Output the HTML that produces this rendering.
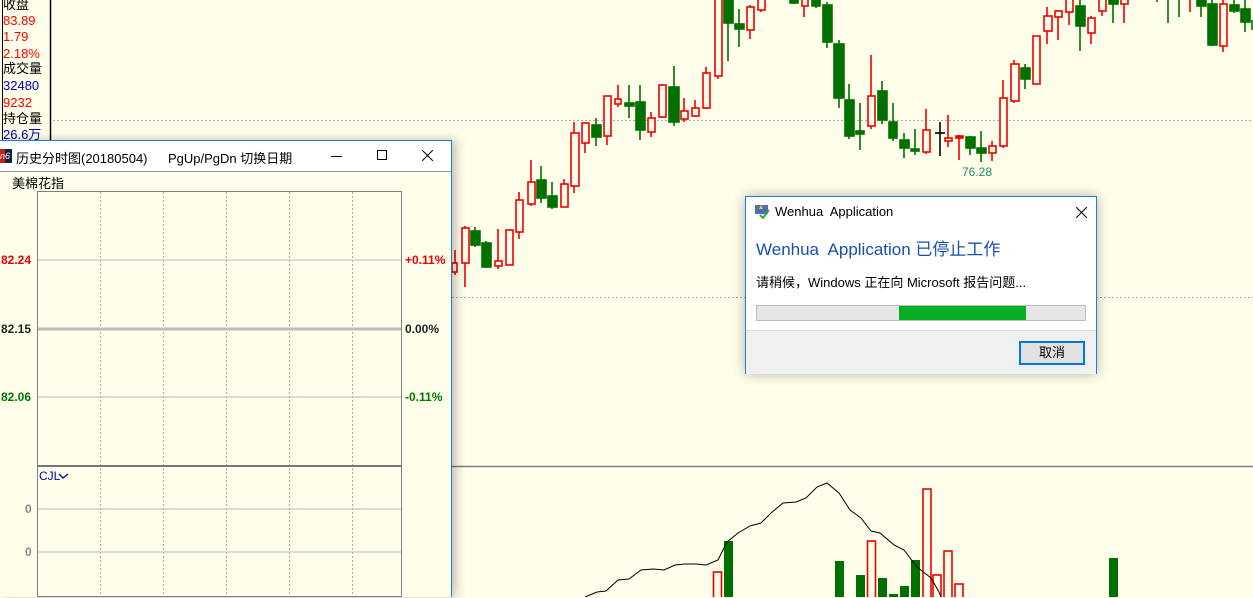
<!DOCTYPE html>
<html><head><meta charset="utf-8"><style>
*{margin:0;padding:0;box-sizing:border-box}
body{width:1253px;height:597px;overflow:hidden;background:#fffeea;position:relative;font-family:"Liberation Sans","Noto Sans CJK SC",sans-serif}
.a{position:absolute;white-space:nowrap}
.lp{font-size:13px;left:3px;line-height:16px}
</style></head><body>
<svg class="a" style="left:0;top:0" width="1253" height="597">
<line x1="2.5" y1="0" x2="2.5" y2="140" stroke="#000"/>
<line x1="50.5" y1="0" x2="50.5" y2="140" stroke="#000" stroke-width="1.5"/>
<line x1="53" y1="120.5" x2="1253" y2="120.5" stroke="#aaa" stroke-dasharray="2,2"/>
<line x1="452" y1="297.5" x2="1253" y2="297.5" stroke="#aaa" stroke-dasharray="2,2"/>
<line x1="452" y1="466.5" x2="1253" y2="466.5" stroke="#808080" stroke-width="1.5"/>
<g stroke-width="1.6">
<g stroke="#e00" fill="#fffeea">
<line x1="455" y1="250" x2="455" y2="275"/><rect x="452" y="263" width="5" height="9"/>
<line x1="465" y1="226" x2="465" y2="287"/><rect x="462" y="228" width="7" height="35"/>
<line x1="498" y1="229" x2="498" y2="269"/><rect x="495" y="261" width="7" height="5"/>
<line x1="509" y1="230" x2="509" y2="265"/><rect x="506" y="230" width="7" height="35"/>
<line x1="519" y1="192" x2="519" y2="239"/><rect x="516" y="200" width="7" height="32"/>
<line x1="531" y1="160" x2="531" y2="206"/><rect x="528" y="182" width="7" height="22"/>
<line x1="564" y1="179" x2="564" y2="207"/><rect x="561" y="184" width="7" height="23"/>
<line x1="574" y1="122" x2="574" y2="193"/><rect x="571" y="133" width="8" height="53"/>
<line x1="585" y1="123" x2="585" y2="153"/><rect x="582" y="123" width="7" height="20"/>
<line x1="607" y1="96" x2="607" y2="145"/><rect x="604" y="96" width="7" height="40"/>
<line x1="618" y1="85" x2="618" y2="107"/><rect x="615" y="99" width="6" height="5"/>
<line x1="651" y1="112" x2="651" y2="137"/><rect x="648" y="118" width="7" height="14"/>
<line x1="662" y1="84" x2="662" y2="118"/><rect x="659" y="85" width="7" height="32"/>
<line x1="684" y1="98" x2="684" y2="122"/><rect x="681" y="111" width="7" height="8"/>
<line x1="695" y1="100" x2="695" y2="117"/><rect x="692" y="108" width="7" height="8"/>
<line x1="706" y1="67" x2="706" y2="109"/><rect x="703" y="73" width="7" height="35"/>
<line x1="718" y1="-2" x2="718" y2="79"/><rect x="715" y="-2" width="7" height="78"/>
<line x1="750" y1="5" x2="750" y2="39"/><rect x="747" y="7" width="7" height="23"/>
<line x1="761" y1="-2" x2="761" y2="12"/><rect x="758" y="-2" width="7" height="12"/>
<line x1="804" y1="-2" x2="804" y2="17"/><rect x="802" y="-2" width="6" height="8"/>
<line x1="871" y1="55" x2="871" y2="129"/><rect x="868" y="96" width="7" height="30"/>
<line x1="926" y1="109" x2="926" y2="154"/><rect x="923" y="130" width="7" height="22"/>
<line x1="948" y1="115" x2="948" y2="147"/><rect x="945" y="138" width="7" height="3"/>
<line x1="959" y1="135" x2="959" y2="160"/><rect x="956" y="136" width="7" height="2" fill="#e00"/>
<line x1="992" y1="141" x2="992" y2="161"/><rect x="989" y="146" width="7" height="7"/>
<line x1="1003" y1="80" x2="1003" y2="148"/><rect x="1000" y="98" width="7" height="48"/>
<line x1="1014" y1="60" x2="1014" y2="103"/><rect x="1011" y="64" width="8" height="37"/>
<line x1="1036" y1="36" x2="1036" y2="84"/><rect x="1033" y="36" width="7" height="48"/>
<line x1="1047" y1="7" x2="1047" y2="44"/><rect x="1044" y="16" width="8" height="15"/>
<line x1="1058" y1="10" x2="1058" y2="40"/><rect x="1055" y="11" width="7" height="6"/>
<line x1="1069" y1="-2" x2="1069" y2="25"/><rect x="1066" y="-2" width="7" height="14"/>
<line x1="1091" y1="16" x2="1091" y2="44"/><rect x="1088" y="18" width="7" height="15"/>
<line x1="1102" y1="-2" x2="1102" y2="16"/><rect x="1099" y="-2" width="7" height="13"/>
<line x1="1124" y1="-2" x2="1124" y2="23"/><rect x="1121" y="-2" width="7" height="6"/>
<line x1="1190" y1="0" x2="1190" y2="12"/>
<line x1="1223" y1="0" x2="1223" y2="52"/><rect x="1220" y="4" width="7" height="42"/>
</g>
<g stroke="#007000" fill="#007000">
<line x1="475" y1="227" x2="475" y2="247"/><rect x="471" y="231" width="9" height="14"/>
<line x1="486" y1="241" x2="486" y2="268"/><rect x="482" y="243" width="9" height="24"/>
<line x1="541" y1="166" x2="541" y2="203"/><rect x="537" y="180" width="9" height="18"/>
<line x1="552" y1="182" x2="552" y2="209"/><rect x="548" y="196" width="9" height="11"/>
<line x1="596" y1="118" x2="596" y2="146"/><rect x="592" y="125" width="9" height="12"/>
<line x1="629" y1="85" x2="629" y2="118"/><rect x="625" y="103" width="9" height="3"/>
<line x1="640" y1="85" x2="640" y2="140"/><rect x="636" y="102" width="9" height="28"/>
<line x1="674" y1="66" x2="674" y2="126"/><rect x="669" y="87" width="10" height="35"/>
<line x1="728" y1="-2" x2="728" y2="61"/><rect x="724" y="-2" width="9" height="25"/>
<line x1="739" y1="9" x2="739" y2="47"/><rect x="735" y="24" width="9" height="5"/>
<line x1="794" y1="-2" x2="794" y2="4"/><rect x="790" y="-2" width="8" height="5"/>
<line x1="816" y1="-2" x2="816" y2="8"/><rect x="812" y="-2" width="8" height="8"/>
<line x1="827" y1="2" x2="827" y2="48"/><rect x="823" y="5" width="9" height="37"/>
<line x1="839" y1="40" x2="839" y2="108"/><rect x="834" y="44" width="10" height="54"/>
<line x1="849" y1="84" x2="849" y2="139"/><rect x="845" y="100" width="9" height="36"/>
<line x1="860" y1="103" x2="860" y2="150"/><rect x="856" y="131" width="8" height="3"/>
<line x1="882" y1="81" x2="882" y2="124"/><rect x="878" y="91" width="9" height="29"/>
<line x1="893" y1="103" x2="893" y2="141"/><rect x="889" y="122" width="8" height="16"/>
<line x1="904" y1="133" x2="904" y2="158"/><rect x="900" y="140" width="9" height="8"/>
<line x1="915" y1="129" x2="915" y2="155"/><rect x="911" y="149" width="8" height="2"/>
<line x1="970" y1="136" x2="970" y2="155"/><rect x="966" y="137" width="9" height="11"/>
<line x1="981" y1="131" x2="981" y2="162"/><rect x="977" y="148" width="9" height="5"/>
<line x1="1025" y1="64" x2="1025" y2="89"/><rect x="1021" y="68" width="9" height="11"/>
<line x1="1080" y1="-2" x2="1080" y2="51"/><rect x="1076" y="6" width="9" height="20"/>
<line x1="1113" y1="-2" x2="1113" y2="23"/><rect x="1109" y="-2" width="9" height="6"/>
<line x1="1157" y1="0" x2="1157" y2="2"/>
<line x1="1168" y1="0" x2="1168" y2="23"/>
<line x1="1179" y1="0" x2="1179" y2="17"/>
<line x1="1201" y1="0" x2="1201" y2="17"/><rect x="1197" y="-2" width="9" height="8"/>
<line x1="1212" y1="0" x2="1212" y2="46"/><rect x="1208" y="4" width="9" height="41"/>
<line x1="1234" y1="0" x2="1234" y2="13"/><rect x="1230" y="5" width="9" height="6"/>
<line x1="1245" y1="0" x2="1245" y2="32"/><rect x="1241" y="9" width="9" height="13"/>
<line x1="1252" y1="20" x2="1252" y2="30"/>
</g>
<g stroke="#000"><line x1="940" y1="122" x2="940" y2="156"/><line x1="935" y1="133" x2="945" y2="133"/></g>
<g stroke="#e00" fill="none">
<rect x="713.5" y="572" width="8" height="30"/><rect x="867.5" y="541" width="8" height="60"/>
<rect x="923" y="489" width="8" height="112"/><rect x="933" y="575" width="8" height="30"/>
<rect x="944" y="551" width="8" height="50"/><rect x="955" y="584" width="8" height="20"/>
</g>
<g fill="#007000" stroke="none">
<rect x="724" y="541" width="9" height="60"/><rect x="835" y="561" width="9" height="40"/>
<rect x="856" y="575" width="9" height="30"/><rect x="878" y="578" width="9" height="30"/>
<rect x="889" y="594" width="9" height="10"/><rect x="900" y="586" width="9" height="20"/>
<rect x="911" y="560" width="9" height="40"/><rect x="1109" y="558" width="9" height="40"/>
</g>
</g>
<polyline fill="none" stroke="#000" stroke-width="1" points="585,597 597,592 606,591 618,580 629,579 641,570 653,569 664,570 675,565 685,564 696,564 706,565 718,560 727,542 738,533 750,526 761,523 771,513 783,503 796,502 806,498 817,487 827,483 839,493 850,510 861,518 871,531 880,533 894,545 904,550 917,567 931,578 939,592 941,597"/>
<text x="962" y="176" font-size="12" fill="#238a6a" font-family="Liberation Sans">76.28</text>
</svg>

<div class="a lp" style="top:-3px;color:#000">收盘</div>
<div class="a lp" style="top:13px;color:#f00">83.89</div>
<div class="a lp" style="top:29px;color:#f00">1.79</div>
<div class="a lp" style="top:46px;color:#f00">2.18%</div>
<div class="a lp" style="top:61px;color:#000">成交量</div>
<div class="a lp" style="top:78px;color:#00a">32480</div>
<div class="a lp" style="top:95px;color:#f00">9232</div>
<div class="a lp" style="top:111px;color:#000">持仓量</div>
<div class="a lp" style="top:127px;color:#00a">26.6万</div>

<div class="a" style="left:0;top:140px;width:452px;height:457px;background:#fffeea;border-top:1px solid #1c7ed6;border-right:1px solid #1c7ed6;box-shadow:4px 0 10px rgba(0,0,0,.25)">
 <div style="height:31px;background:#fff;border-bottom:1px solid #999;position:relative">
  <div class="a" style="left:0;top:8px;width:12px;height:14px;background:linear-gradient(90deg,#c21 0,#c21 40%,#124 40%);color:#fff;font-size:9px;font-style:italic;line-height:14px">n6</div>
  <div class="a" style="left:16px;top:7px;font-size:13px">历史分时图(20180504)</div>
  <div class="a" style="left:168px;top:7px;font-size:13px">PgUp/PgDn 切换日期</div>
  <div class="a" style="left:331px;top:15px;width:11px;height:1px;background:#000"></div>
  <div class="a" style="left:377px;top:9px;width:10px;height:10px;border:1px solid #000"></div>
  <svg class="a" style="left:422px;top:9px" width="11" height="11"><path d="M0 0L11 11M11 0L0 11" stroke="#000"/></svg>
 </div>
 <div class="a" style="left:12px;top:32px;font-size:13px">美棉花指</div>
 <svg class="a" style="left:0;top:-1px" width="451" height="458">
  <g stroke="#aaa" stroke-dasharray="2,2"><line x1="100.5" y1="52" x2="100.5" y2="456"/><line x1="163.5" y1="52" x2="163.5" y2="456"/><line x1="226.5" y1="52" x2="226.5" y2="456"/><line x1="289.5" y1="52" x2="289.5" y2="456"/><line x1="352.5" y1="52" x2="352.5" y2="456"/></g>
  <g stroke="#bbb"><line x1="37" y1="120" x2="402" y2="120"/><line x1="37" y1="257" x2="402" y2="257"/><line x1="37" y1="369" x2="402" y2="369"/><line x1="37" y1="412" x2="402" y2="412"/></g>
  <line x1="37" y1="189" x2="402" y2="189" stroke="#bbb" stroke-width="3"/>
  <line x1="37" y1="326" x2="402" y2="326" stroke="#777" stroke-width="2"/>
  <rect x="37.5" y="51.5" width="364" height="405" fill="none" stroke="#808080"/>
  <g font-size="12" font-weight="bold" font-family="Liberation Sans">
   <text x="1" y="124" fill="#e00">82.24</text><text x="1" y="193" fill="#222">82.15</text><text x="1" y="261" fill="#070">82.06</text>
   <text x="405" y="124" fill="#e00">+0.11%</text><text x="405" y="193" fill="#222">0.00%</text><text x="405" y="261" fill="#070">-0.11%</text>
   <text x="25" y="373" fill="#888">0</text><text x="25" y="416" fill="#888">0</text>
  </g>
  <text x="39" y="340" font-size="12" fill="#00a" font-family="Liberation Sans">CJL</text>
  <path d="M59 334l4 4 5-4" fill="none" stroke="#00a" stroke-width="1.3"/>
 </svg>
</div>

<div class="a" style="left:745px;top:196px;width:352px;height:178px;background:#fff;border:1px solid #1c7ed6;box-shadow:0 0 12px rgba(0,0,0,.3);font-family:'Liberation Sans','Noto Sans CJK SC',sans-serif">
 <svg class="a" style="left:8px;top:6px" width="16" height="16"><rect x="1" y="2" width="13" height="9" fill="#4a6fb8"/><path d="M5 6l2-4 2 4z" fill="#fc0"/><path d="M6 12l3 3 6-8" stroke="#3a3" stroke-width="2" fill="none"/></svg>
 <div class="a" style="left:29px;top:7px;font-size:13px">Wenhua&nbsp; Application</div>
 <svg class="a" style="left:330px;top:10px" width="11" height="11"><path d="M0 0L11 11M11 0L0 11" stroke="#000"/></svg>
 <div class="a" style="left:10px;top:38px;font-size:17px;color:#1a4eb0">Wenhua&nbsp; Application 已停止工作</div>
 <div class="a" style="left:10px;top:75px;font-size:13px">请稍候，Windows 正在向 Microsoft 报告问题...</div>
 <div class="a" style="left:10px;top:108px;width:330px;height:16px;background:#e6e6e6;border:1px solid #bcbcbc"><div class="a" style="left:142px;top:0;width:127px;height:14px;background:#06b025"></div></div>
 <div class="a" style="left:0;top:133px;width:350px;height:44px;background:#f0f0f0;border-top:1px solid #dfdfdf">
  <div class="a" style="left:273px;top:10px;width:66px;height:24px;background:#e1e1e1;border:2px solid #0078d7;font-size:13px;text-align:center;line-height:20px">取消</div>
 </div>
</div>
</body></html>
